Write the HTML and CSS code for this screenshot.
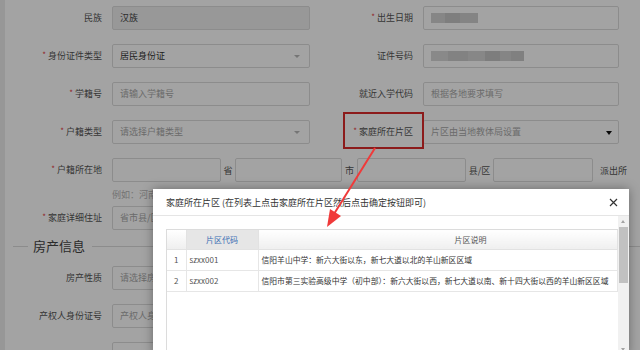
FILE: index.html
```html
<!DOCTYPE html>
<html lang="zh-CN">
<head>
<meta charset="utf-8">
<title>学生信息</title>
<link rel="stylesheet" href="styles.css">
</head>
<body>
<div class="page">
  <div class="row">
    <div class="lbl">民族</div>
    <div class="inp dis">汉族</div>
    <div class="lbl req">出生日期</div>
    <div class="inp"><span class="mosaic m1"></span></div>
  </div>
  <div class="row">
    <div class="lbl req">身份证件类型</div>
    <div class="inp sel">居民身份证</div>
    <div class="lbl">证件号码</div>
    <div class="inp"><span class="mosaic m2"></span></div>
  </div>
  <div class="row">
    <div class="lbl req">学籍号</div>
    <div class="inp ph">请输入学籍号</div>
    <div class="lbl">就近入学代码</div>
    <div class="inp ph">根据各地要求填写</div>
  </div>
  <div class="row">
    <div class="lbl req">户籍类型</div>
    <div class="inp sel ph">请选择户籍类型</div>
    <div class="lbl req">家庭所在片区</div>
    <div class="inp sel dark ph">片区由当地教体局设置</div>
  </div>
  <div class="row tight">
    <div class="lbl req">户籍所在地</div>
    <div class="addr">
      <div class="inp a1"></div><span class="unit u1">省</span>
      <div class="inp a2"></div><span class="unit u2">市</span>
      <div class="inp a3"></div><span class="unit u3">县/区</span>
      <div class="inp a4"></div><span class="unit u4">派出所</span>
    </div>
  </div>
  <div class="hint">例如：河南省郑州市金水县/区某某路派出所</div>
  <div class="row tight">
    <div class="lbl req">家庭详细住址</div>
    <div class="inp wide ph">省市县/区街道门牌号</div>
  </div>
  <div class="sec"><span class="sec-title">房产信息</span></div>
  <div class="row">
    <div class="lbl">房产性质</div>
    <div class="inp sel ph">请选择房产性质</div>
  </div>
  <div class="row">
    <div class="lbl">产权人身份证号</div>
    <div class="inp ph">产权人身份证号</div>
  </div>
  <div class="row">
    <div class="lbl"></div>
    <div class="inp"></div>
  </div>
</div>

<div class="mask"></div>

<div class="dialog">
  <div class="dlg-head">
    <span class="dlg-title">家庭所在片区 (在列表上点击家庭所在片区然后点击确定按钮即可)</span>
    <svg class="close" width="9" height="9" viewBox="0 0 9 9"><path d="M1 1L8 8M8 1L1 8" stroke="#333" stroke-width="1.2" fill="none"/></svg>
  </div>
  <div class="dlg-body">
    <div class="dlg-content">
      <div class="grid">
        <table class="tbl">
          <thead>
            <tr><th class="c-num"></th><th class="c-code sorted">片区代码</th><th class="c-desc"><span class="desc-head">片区说明</span></th></tr>
          </thead>
          <tbody>
            <tr><td class="c-num">1</td><td class="c-code">szxx001</td><td class="c-desc">信阳羊山中学：新六大街以东，新七大道以北的羊山新区区域</td></tr>
            <tr><td class="c-num">2</td><td class="c-code">szxx002</td><td class="c-desc">信阳市第三实验高级中学（初中部）：新六大街以西，新七大道以南、新十四大街以西的羊山新区区域</td></tr>
          </tbody>
        </table>
      </div>
    </div>
    <div class="vscroll">
      <div class="sb-btn up"></div>
      <div class="sb-thumb"></div>
      <div class="sb-track"></div>
      <div class="sb-btn down"></div>
    </div>
  </div>
</div>

<div class="callout"></div>
<svg class="arrow" width="640" height="350" viewBox="0 0 640 350">
  <line x1="375" y1="148" x2="334" y2="214" stroke="#f03a3a" stroke-width="2"/>
  <polygon points="327,227 330,209 341,216" fill="#f03a3a"/>
</svg>
</body>
</html>
```

FILE: styles.css
```css
* { box-sizing: border-box; }

html, body {
  margin: 0;
  width: 640px;
  height: 350px;
  overflow: hidden;
}

body {
  font-family: "Noto Sans CJK SC", "Microsoft YaHei", sans-serif;
  font-size: 9px;
  color: #555;
  background: #ececec;
  position: relative;
}

.page {
  margin-left: 5px;
  height: 350px;
  background: #fff;
  padding: 6px 0 0 4px;
}

.row {
  display: grid;
  grid-template-columns: 93px 198px 93px 196px;
  column-gap: 10px;
  height: 24px;
  margin-bottom: 14px;
}
.row.tight { margin-bottom: 0; }

.lbl {
  text-align: right;
  line-height: 24px;
  color: #555;
  white-space: nowrap;
}
.req::before {
  content: "*";
  color: #e4393c;
  margin-right: 2px;
  font-size: 8px;
  position: relative;
  top: -1px;
}

.inp {
  position: relative;
  height: 24px;
  border: 1px solid #dcdcdc;
  border-radius: 2px;
  background: #fff;
  padding: 0 7px;
  line-height: 22px;
  color: #333;
  white-space: nowrap;
  overflow: hidden;
}
.inp.ph { color: #a8a8a8; }
.inp.dis { background: #eeeeee; color: #444; }
.inp.wide { grid-column: 2 / 5; }

.inp.sel::after {
  content: "";
  position: absolute;
  right: 9px;
  top: 10px;
  border-left: 3px solid transparent;
  border-right: 3px solid transparent;
  border-top: 3px solid #b8b8b8;
}
.inp.sel.dark::after {
  border-left-width: 3.5px;
  border-right-width: 3.5px;
  border-top: 4px solid #111;
  right: 6px;
}

.mosaic {
  display: inline-block;
  height: 10px;
  vertical-align: middle;
  margin-top: -2px;
  filter: blur(0.6px);
}
.m1 {
  width: 47px;
  background: linear-gradient(90deg, #d2d2d2 0 30%, #c6c6c6 30% 62%, #cfcfcf 62% 100%);
}
.m2 {
  width: 93px;
  background: linear-gradient(90deg, #d6d6d6 0 18%, #cbcbcb 18% 40%, #d3d3d3 40% 58%, #c4c4c4 58% 74%, #d0d0d0 74% 86%, #c8c8c8 86% 100%);
}

.addr {
  grid-column: 2 / 5;
  display: flex;
  align-items: center;
  white-space: nowrap;
}
.addr .a1 { width: 109px; flex: none; }
.addr .a2 { width: 107px; flex: none; }
.addr .a3 { width: 109px; flex: none; }
.addr .a4 { width: 100px; flex: none; }
.unit { flex: none; text-align: center; color: #555; }
.u1 { width: 14px; }
.u2 { width: 15px; }
.u3 { width: 27px; }
.u4 { margin-left: 7px; }

.hint {
  height: 24px;
  padding: 6px 0 0 103px;
  line-height: 14px;
  color: #b5b5b5;
}

.sec {
  display: flex;
  align-items: center;
  height: 20px;
  margin: 6px 0 10px 4px;
}
.sec::before {
  content: "";
  width: 15px;
  height: 1px;
  background: #dcdcdc;
  margin-right: 5px;
}
.sec::after {
  content: "";
  flex: 1;
  height: 1px;
  background: #dcdcdc;
  margin-left: 7px;
}
.sec-title {
  font-size: 13px;
  color: #444;
  line-height: 20px;
}

.mask {
  position: absolute;
  inset: 0;
  background: rgba(0, 0, 0, 0.36);
}

.dialog {
  position: absolute;
  left: 153px;
  top: 189px;
  width: 476px;
  height: 166px;
  background: #fff;
  box-shadow: 0 0 10px rgba(0, 0, 0, 0.35);
  display: flex;
  flex-direction: column;
}
.dlg-head {
  height: 27px;
  flex: none;
  border-bottom: 1px solid #e5e5e5;
  display: flex;
  align-items: center;
  padding: 0 11px 0 13px;
}
.dlg-title {
  flex: 1;
  font-size: 9px;
  color: #333;
  white-space: nowrap;
}
.close { flex: none; }

.dlg-body {
  flex: 1;
  display: flex;
  overflow: hidden;
}
.dlg-content {
  flex: 1;
  padding: 13px 0 0 13px;
  overflow: hidden;
}
.grid {
  height: 100%;
  border-left: 1px solid #dcdcdc;
  border-top: 1px solid #dcdcdc;
}
.tbl {
  width: 100%;
  border-collapse: collapse;
  table-layout: fixed;
  font-size: 8px;
}
.tbl th {
  height: 19px;
  font-weight: normal;
  color: #555;
  background: linear-gradient(#ffffff, #efefef);
  border-right: 1px solid #e2e2e2;
  border-bottom: 1px solid #e2e2e2;
  padding: 0;
  white-space: nowrap;
}
.tbl th.sorted {
  background: #e6e6e6;
  color: #3c6eb4;
}
.tbl th.c-desc { text-align: left; }
.desc-head { padding-left: 196px; }
.tbl td {
  height: 21px;
  border-right: 1px solid #e6e6e6;
  border-bottom: 1px solid #e6e6e6;
  padding: 0 3px;
  white-space: nowrap;
  overflow: hidden;
}
.tbl .c-num { width: 19px; text-align: center; color: #555; padding: 0; }
.tbl .c-code { width: 72px; }
.tbl td.c-code { color: #555; }
.tbl td.c-desc { color: #333; font-size: 7.8px; }

.vscroll {
  flex: none;
  width: 11px;
  background: #f1f1f1;
  display: flex;
  flex-direction: column;
}
.sb-btn {
  height: 11px;
  flex: none;
  position: relative;
}
.sb-btn::after {
  content: "";
  position: absolute;
  left: 3px;
  border-left: 2.5px solid transparent;
  border-right: 2.5px solid transparent;
}
.sb-btn.up::after { top: 4px; border-bottom: 3px solid #a3a3a3; }
.sb-btn.down::after { top: 4px; border-top: 3px solid #a3a3a3; }
.sb-thumb {
  height: 56px;
  flex: none;
  margin: 0 1px;
  background: #c1c1c1;
}
.sb-track { flex: 1; }

.callout {
  position: absolute;
  left: 343px;
  top: 112px;
  width: 81px;
  height: 37px;
  border: 2px solid #8c1b1b;
}
.arrow {
  position: absolute;
  left: 0;
  top: 0;
}
```
